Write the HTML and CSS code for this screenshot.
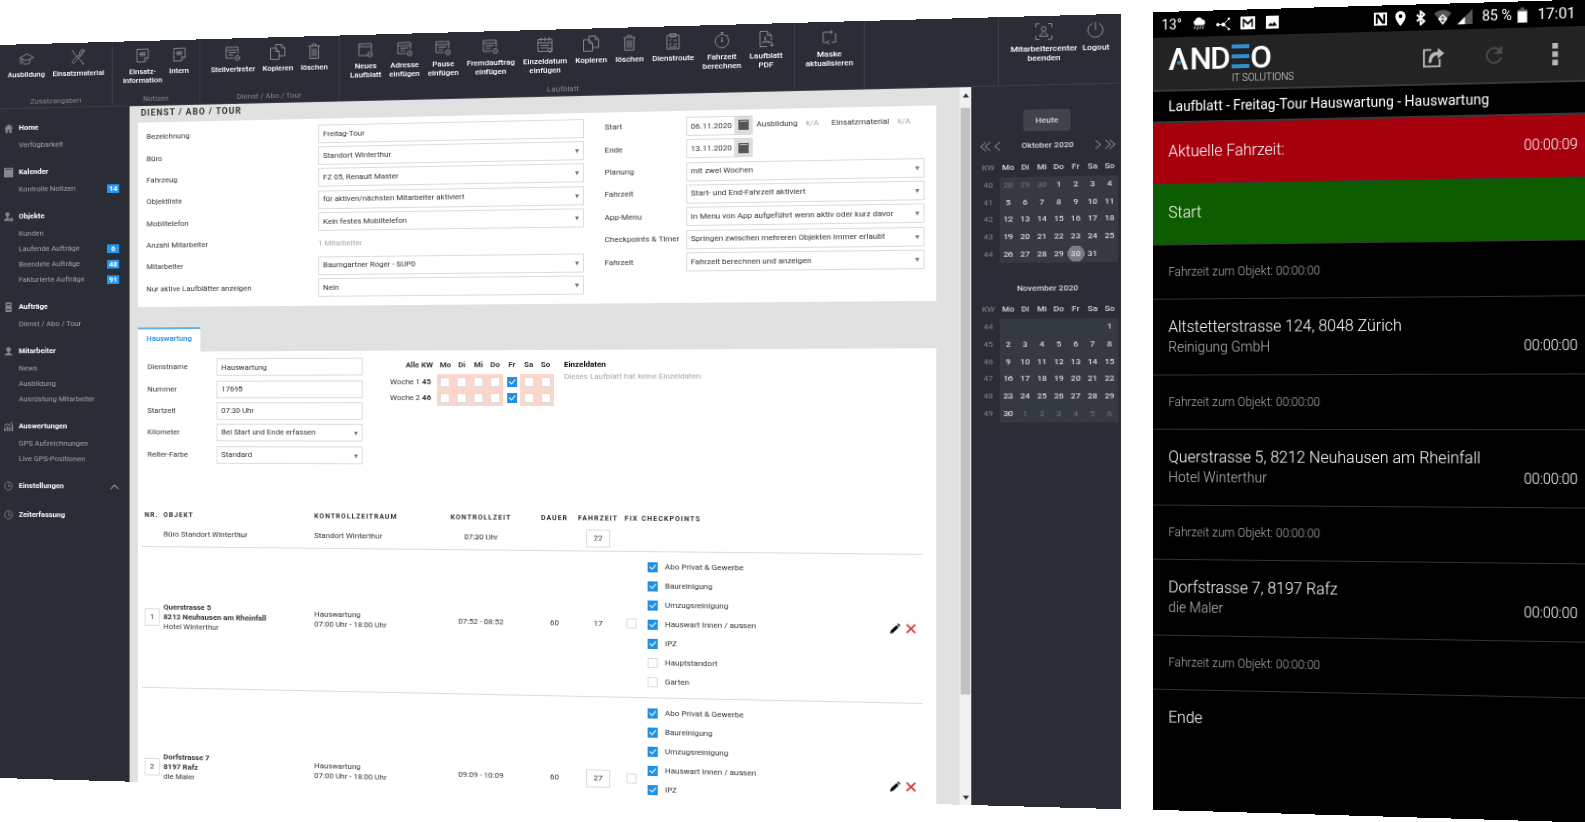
FILE: index.html
```html
<!DOCTYPE html>
<html lang="de">
<head>
<meta charset="utf-8">
<title>ANDEO – Dienst / Abo / Tour</title>
<link rel="stylesheet" href="styles.css">
</head>
<body>
<svg class="sprite" aria-hidden="true">
  <symbol id="cap" viewBox="0 0 18 18"><path d="M2 8l8-4 7 4-8 3zM5 9.500v4c2 1.500 6 1.500 8 0v-4M3 9v6"/></symbol>
  <symbol id="tools" viewBox="0 0 18 18"><path d="M4 4l11 12M2 2l2 .5.5 2M15 16l-2 0M10 8l4-4M16 2.500a3 3 0 0 0-3 4L5.500 14a1.500 1.500 0 1 1-2-2L11 5.500a3 3 0 0 1 4-4l-1.500 2 1 1z"/></symbol>
  <symbol id="note" viewBox="0 0 18 18"><path d="M3 2.500h12v9l-4 4H3zM11 15.500v-4h4M6 6h6M6 9h6M5 7.500h7" /></symbol>
  <symbol id="form" viewBox="0 0 18 18"><path d="M2 3h13v7M2 3v11h8M2 6h13M4.500 8.500h8M4.500 11h5"/><circle cx="14" cy="14" r="2.500"/><path d="M12.800 14h2.400"/></symbol>
  <symbol id="copy" viewBox="0 0 18 18"><path d="M7 5V1.500h6l3.500 3.500v8H11M13 1.500V5h3.500M1.500 5H7l3.500 3.500v8h-9zM7 5v3.500h3.500"/></symbol>
  <symbol id="trash" viewBox="0 0 18 18"><path d="M3 4h12M7 4V2h4v2M4.500 4v12.500h9V4M7 6.500v8M9 6.500v8M11 6.500v8"/></symbol>
  <symbol id="new" viewBox="0 0 18 18"><path d="M2 3h13v8M2 3v12h9M2 6h13M4 4.500h1"/><circle cx="13.500" cy="14" r="2.500"/><path d="M12.300 14h2.400"/></symbol>
  <symbol id="date" viewBox="0 0 18 18"><path d="M2 3.500h14v12H2zM2 7h14M5 1.500v4M9 1.500v4M13 1.500v4M4.500 9.500h9M4.500 12h8"/><circle cx="14" cy="14.500" r="2"/></symbol>
  <symbol id="route" viewBox="0 0 18 18"><path d="M3 3h12v13.500H3zM6 1.500h6v3H6zM5 7.500l1 1 1.500-2M5 11.500l1 1 1.500-2M9.500 8h3.500M9.500 12h3.500M5 14.500h8"/></symbol>
  <symbol id="watch" viewBox="0 0 18 18"><circle cx="9" cy="10" r="6.500"/><path d="M9 6v5M7.500 1.500h3M9 1.500v2M14 4l1 1M8 10h2"/></symbol>
  <symbol id="pdf" viewBox="0 0 18 18"><path d="M10 16.500H3v-15h7l4 4v5M10 1.500v4h4M5 13c3-2 4-5 3-6s-1 4 4 5-6-1-7 1M14.500 12v4M12.500 14.500l2 2 2-2"/></symbol>
  <symbol id="refresh" viewBox="0 0 18 18"><path d="M7 14H3V4h9M11 14h4V5M10 2l2 2-2 2M9 12l-2 2 2 2"/></symbol>
  <symbol id="person" viewBox="0 0 18 18"><path d="M1.500 5V1.500H5M13 1.500h3.500V5M16.500 13v3.500H13M5 16.500H1.500V13M5 13.500c0-2 2-2 3-3v-1M13 13.500c0-2-2-2-3-3v-1M5 13.500h8"/><circle cx="9" cy="6.500" r="2.200"/></symbol>
  <symbol id="power" viewBox="0 0 18 18"><path d="M6 2.500a7 7 0 1 0 6 0M9 1v8"/></symbol>
  <symbol id="home" viewBox="0 0 12 12"><path d="M6 1L0 6.500h2V12h3V8h2v4h3V6.500h2L10 4.500V1.500H9v2z"/></symbol>
  <symbol id="cal" viewBox="0 0 12 12"><path fill-rule="evenodd" d="M0 0h12v12H0zM1.500 1.500v1h9v-1z"/><path class="day" d="M3 5h1.300v4.500H3zM6 5h3v1H7.200v.7H9v2.800H6v-1h1.900V8H6z"/></symbol>
  <symbol id="user" viewBox="0 0 12 12"><circle cx="6" cy="3.500" r="3"/><path d="M5 6h2v2l4 1.500V11H1V9.500L5 8z"/></symbol>
  <symbol id="userhome" viewBox="0 0 12 12"><circle cx="4.500" cy="3" r="2.800"/><path d="M3.500 5h2v2.500L7 8v3H0V9.500l3.500-2zM10 6.500L7.500 9v3h2v-2h1v2H12V9z"/></symbol>
  <symbol id="book" viewBox="0 0 12 12"><path fill-rule="evenodd" d="M2 0h8v12H2zM3.500 2v2h5V2zM3.500 8.500v1h5v-1z"/></symbol>
  <symbol id="chart" viewBox="0 0 12 12"><path d="M0 8h2v4H0zM3.300 6h2v6h-2zM6.600 7h2v5h-2zM10 4h2v8h-2zM0 5l4-3 3 2 4-4 .7.700L7 5.300 4 3.200.600 6z"/></symbol>
  <symbol id="dial" viewBox="0 0 12 12"><circle cx="6" cy="6" r="5" fill="none" stroke="currentColor"/><path d="M6 3h1v3h2v1H5.500z"/></symbol>
  <symbol id="pencil" viewBox="0 0 12 12"><path d="M0 12l1-3.500 6.500-6.500 2.500 2.500L3.500 11zM8.300 1.200L9.500 0 12 2.500l-1.200 1.200z"/></symbol>
</svg>

<main class="stage">
<section class="panel desktop">
  <header class="toolbar">
    <div class="group">
      <div class="tools">
        <button class="tool"><svg><use href="#cap"/></svg>Ausbildung</button>
        <button class="tool"><svg><use href="#tools"/></svg>Einsatzmaterial</button>
      </div>
      <span class="group-title">Zusatzangaben</span>
    </div>
    <div class="group roomy">
      <div class="tools">
        <button class="tool"><svg><use href="#note"/></svg>Einsatz-<br>information</button>
        <button class="tool"><svg><use href="#note"/></svg>Intern</button>
      </div>
      <span class="group-title">Notizen</span>
    </div>
    <div class="group roomy">
      <div class="tools">
        <button class="tool"><svg><use href="#form"/></svg>Stellvertreter</button>
        <button class="tool"><svg><use href="#copy"/></svg>Kopieren</button>
        <button class="tool"><svg><use href="#trash"/></svg>löschen</button>
      </div>
      <span class="group-title">Dienst / Abo / Tour</span>
    </div>
    <div class="group roomy">
      <div class="tools">
        <button class="tool"><svg><use href="#new"/></svg>Neues<br>Laufblatt</button>
        <button class="tool"><svg><use href="#form"/></svg>Adresse<br>einfügen</button>
        <button class="tool"><svg><use href="#form"/></svg>Pause<br>einfügen</button>
        <button class="tool"><svg><use href="#form"/></svg>Fremdauftrag<br>einfügen</button>
        <button class="tool"><svg><use href="#date"/></svg>Einzeldatum<br>einfügen</button>
        <button class="tool"><svg><use href="#copy"/></svg>Kopieren</button>
        <button class="tool"><svg><use href="#trash"/></svg>löschen</button>
        <button class="tool"><svg><use href="#route"/></svg>Dienstroute</button>
        <button class="tool"><svg><use href="#watch"/></svg>Fahrzeit<br>berechnen</button>
        <button class="tool"><svg><use href="#pdf"/></svg>Laufblatt<br>PDF</button>
      </div>
      <span class="group-title">Laufblatt</span>
    </div>
    <div class="group">
      <div class="tools">
        <button class="tool"><svg><use href="#refresh"/></svg>Maske<br>aktualisieren</button>
      </div>
    </div>
    <div class="group"></div>
    <div class="group roomy">
      <div class="tools">
        <button class="tool"><svg><use href="#person"/></svg>Mitarbeitercenter<br>beenden</button>
        <button class="tool"><svg><use href="#power"/></svg>Logout</button>
      </div>
    </div>
  </header>

  <div class="body">
    <nav class="sidebar">
      <section><h2><svg><use href="#home"/></svg>Home</h2>
        <a href="#">Verfügbarkeit</a></section>
      <section><h2><svg><use href="#cal"/></svg>Kalender</h2>
        <a href="#">Kontrolle Notizen<b>14</b></a></section>
      <section><h2><svg><use href="#userhome"/></svg>Objekte</h2>
        <a href="#">Kunden</a>
        <a href="#">Laufende Aufträge<b>6</b></a>
        <a href="#">Beendete Aufträge<b>48</b></a>
        <a href="#">Fakturierte Aufträge<b>91</b></a></section>
      <section><h2><svg><use href="#book"/></svg>Aufträge</h2>
        <a href="#">Dienst / Abo / Tour</a></section>
      <section><h2><svg><use href="#user"/></svg>Mitarbeiter</h2>
        <a href="#">News</a>
        <a href="#">Ausbildung</a>
        <a href="#">Ausrüstung Mitarbeiter</a></section>
      <section><h2><svg><use href="#chart"/></svg>Auswertungen</h2>
        <a href="#">GPS Aufzeichnungen</a>
        <a href="#">Live GPS-Positionen</a></section>
      <section><h2><svg><use href="#dial"/></svg>Einstellungen<svg class="chevron" viewBox="0 0 12 8"><path d="M1 7l5-5 5 5"/></svg></h2></section>
      <section><h2><svg><use href="#dial"/></svg>Zeiterfassung</h2></section>
    </nav>

    <div class="content">
      <h1>DIENST / ABO / TOUR</h1>
      <form class="card tour">
        <div class="rows left">
          <label for="bez">Bezeichnung</label><input id="bez" value="Freitag-Tour">
          <label for="buero">Büro</label><span class="pick"><select id="buero"><option>Standort Winterthur</option></select></span>
          <label for="fzg">Fahrzeug</label><span class="pick"><select id="fzg"><option>FZ 05, Renault Master</option></select></span>
          <label for="obj">Objektliste</label><span class="pick"><select id="obj"><option>für aktiven/nächsten Mitarbeiter aktiviert</option></select></span>
          <label for="mob">Mobiltelefon</label><span class="pick"><select id="mob"><option>Kein festes Mobiltelefon</option></select></span>
          <span>Anzahl Mitarbeiter</span><span class="muted">1 Mitarbeiter</span>
          <label for="mit">Mitarbeiter</label><span class="pick"><select id="mit"><option>Baumgartner Roger - SUP0</option></select></span>
          <label for="akt">Nur aktive Laufblätter anzeigen</label><span class="pick"><select id="akt"><option>Nein</option></select></span>
        </div>
        <div class="rows right">
          <label for="start">Start</label>
          <div class="date"><input id="start" value="06.11.2020"><button type="button" aria-label="Kalender"><svg><use href="#cal"/></svg></button>
            <span>Ausbildung</span><span class="muted">k/A</span><span>Einsatzmaterial</span><span class="muted">k/A</span></div>
          <label for="ende">Ende</label>
          <div class="date"><input id="ende" value="13.11.2020"><button type="button" aria-label="Kalender"><svg><use href="#cal"/></svg></button></div>
          <label for="plan">Planung</label><span class="pick"><select id="plan"><option>mit zwei Wochen</option></select></span>
          <label for="fz1">Fahrzeit</label><span class="pick"><select id="fz1"><option>Start- und End-Fahrzeit aktiviert</option></select></span>
          <label for="app">App-Menu</label><span class="pick"><select id="app"><option>In Menu von App aufgeführt wenn aktiv oder kurz davor</option></select></span>
          <label for="chk">Checkpoints &amp; Timer</label><span class="pick"><select id="chk"><option>Springen zwischen mehreren Objekten immer erlaubt</option></select></span>
          <label for="fz2">Fahrzeit</label><span class="pick"><select id="fz2"><option>Fahrzeit berechnen und anzeigen</option></select></span>
        </div>
      </form>

      <button class="tab">Hauswartung</button>
      <div class="card sheet">
        <div class="service">
          <div class="rows small">
            <label for="dn">Dienstname</label><input id="dn" value="Hauswartung">
            <label for="nr">Nummer</label><input id="nr" value="17695">
            <label for="sz">Startzeit</label><input id="sz" value="07:30 Uhr">
            <label for="km">Kilometer</label><span class="pick"><select id="km"><option>Bei Start und Ende erfassen</option></select></span>
            <label for="rf">Reiter-Farbe</label><span class="pick"><select id="rf"><option>Standard</option></select></span>
          </div>
          <table class="weeks">
            <tr><th>Alle KW</th><th>Mo</th><th>Di</th><th>Mi</th><th>Do</th><th>Fr</th><th>Sa</th><th>So</th></tr>
            <tr><td>Woche 1 <b>45</b></td><td class="off"><input type="checkbox" aria-label="Mo 45"></td><td class="off"><input type="checkbox" aria-label="Di 45"></td><td class="off"><input type="checkbox" aria-label="Mi 45"></td><td class="off"><input type="checkbox" aria-label="Do 45"></td><td><input type="checkbox" checked aria-label="Fr 45"></td><td class="off"><input type="checkbox" aria-label="Sa 45"></td><td class="off"><input type="checkbox" aria-label="So 45"></td></tr>
            <tr><td>Woche 2 <b>46</b></td><td class="off"><input type="checkbox" aria-label="Mo 46"></td><td class="off"><input type="checkbox" aria-label="Di 46"></td><td class="off"><input type="checkbox" aria-label="Mi 46"></td><td class="off"><input type="checkbox" aria-label="Do 46"></td><td><input type="checkbox" checked aria-label="Fr 46"></td><td class="off"><input type="checkbox" aria-label="Sa 46"></td><td class="off"><input type="checkbox" aria-label="So 46"></td></tr>
          </table>
          <div class="single"><h3>Einzeldaten</h3><p>Dieses Laufblatt hat keine Einzeldaten.</p></div>
        </div>

        <table class="stops">
          <colgroup><col class="c-nr"><col class="c-obj"><col class="c-span"><col class="c-time"><col class="c-dur"><col class="c-drive"><col class="c-fix"><col><col class="c-act"></colgroup>
          <thead><tr><th>NR.</th><th>OBJEKT</th><th>KONTROLLZEITRAUM</th><th class="mid">KONTROLLZEIT</th><th class="mid">DAUER</th><th class="mid">FAHRZEIT</th><th class="mid">FIX</th><th class="points-head">CHECKPOINTS</th><th></th></tr></thead>
          <tbody>
            <tr class="base"><td></td><td>Büro Standort Winterthur</td><td>Standort Winterthur</td><td class="mid">07:30 Uhr</td><td></td><td class="mid"><input class="num" value="22" aria-label="Fahrzeit"></td><td></td><td></td><td></td></tr>
            <tr class="stop"><td><input class="pos" value="1" aria-label="Nr."></td><td><b>Querstrasse 5<br>8212 Neuhausen am Rheinfall</b><br>Hotel Winterthur</td><td>Hauswartung<br>07:00 Uhr - 18:00 Uhr</td><td class="mid">07:52 - 08:52</td><td class="mid">60</td><td class="mid">17</td><td class="mid"><input type="checkbox" aria-label="Fix"></td>
              <td class="points"><label><input type="checkbox" checked>Abo Privat &amp; Gewerbe</label><label><input type="checkbox" checked>Baureinigung</label><label><input type="checkbox" checked>Umzugsreinigung</label><label><input type="checkbox" checked>Hauswart Innen / aussen</label><label><input type="checkbox" checked>IPZ</label><label><input type="checkbox">Hauptstandort</label><label><input type="checkbox">Garten</label></td>
              <td><div class="acts"><button aria-label="Bearbeiten"><svg><use href="#pencil"/></svg></button><button class="del" aria-label="Löschen"><svg viewBox="0 0 12 12"><path d="M1 1l10 10M11 1L1 11"/></svg></button></div></td></tr>
            <tr class="stop last"><td><input class="pos" value="2" aria-label="Nr."></td><td><b>Dorfstrasse 7<br>8197 Rafz</b><br>die Maler</td><td>Hauswartung<br>07:00 Uhr - 18:00 Uhr</td><td class="mid">09:09 - 10:09</td><td class="mid">60</td><td class="mid"><input class="num" value="27" aria-label="Fahrzeit"></td><td class="mid"><input type="checkbox" aria-label="Fix"></td>
              <td class="points"><label><input type="checkbox" checked>Abo Privat &amp; Gewerbe</label><label><input type="checkbox" checked>Baureinigung</label><label><input type="checkbox" checked>Umzugsreinigung</label><label><input type="checkbox" checked>Hauswart Innen / aussen</label><label><input type="checkbox" checked>IPZ</label></td>
              <td><div class="acts"><button aria-label="Bearbeiten"><svg><use href="#pencil"/></svg></button><button class="del" aria-label="Löschen"><svg viewBox="0 0 12 12"><path d="M1 1l10 10M11 1L1 11"/></svg></button></div></td></tr>
          </tbody>
        </table>
      </div>
    </div>

    <div class="scroll"><i class="up"></i><i class="thumb"></i><i class="down"></i></div>

    <aside class="calendar">
      <button class="today">Heute</button>
      <div class="month"><svg viewBox="0 0 24 12"><path d="M7 1L1 6l6 5M12 1L6 6l6 5M23 1l-6 5 6 5"/></svg><span>Oktober 2020</span><svg viewBox="0 0 24 12"><path d="M1 1l6 5-6 5M12 1l6 5-6 5M17 1l6 5-6 5"/></svg></div>
      <table class="days five">
        <thead><tr><th>KW</th><th>Mo</th><th>Di</th><th>Mi</th><th>Do</th><th>Fr</th><th>Sa</th><th>So</th></tr></thead>
        <tbody>
        <tr><th>40</th><td class="dim">28</td><td class="dim">29</td><td class="dim">30</td><td>1</td><td>2</td><td>3</td><td>4</td></tr>
        <tr><th>41</th><td>5</td><td>6</td><td>7</td><td>8</td><td>9</td><td>10</td><td>11</td></tr>
        <tr><th>42</th><td>12</td><td>13</td><td>14</td><td>15</td><td>16</td><td>17</td><td>18</td></tr>
        <tr><th>43</th><td>19</td><td>20</td><td>21</td><td>22</td><td>23</td><td>24</td><td>25</td></tr>
        <tr><th>44</th><td>26</td><td>27</td><td>28</td><td>29</td><td class="now">30</td><td>31</td><td></td></tr>
        </tbody>
      </table>
      <div class="month plain"><span>November 2020</span></div>
      <table class="days six">
        <thead><tr><th>KW</th><th>Mo</th><th>Di</th><th>Mi</th><th>Do</th><th>Fr</th><th>Sa</th><th>So</th></tr></thead>
        <tbody>
        <tr><th>44</th><td></td><td></td><td></td><td></td><td></td><td></td><td>1</td></tr>
        <tr><th>45</th><td>2</td><td>3</td><td>4</td><td>5</td><td>6</td><td>7</td><td>8</td></tr>
        <tr><th>46</th><td>9</td><td>10</td><td>11</td><td>12</td><td>13</td><td>14</td><td>15</td></tr>
        <tr><th>47</th><td>16</td><td>17</td><td>18</td><td>19</td><td>20</td><td>21</td><td>22</td></tr>
        <tr><th>48</th><td>23</td><td>24</td><td>25</td><td>26</td><td>27</td><td>28</td><td>29</td></tr>
        <tr><th>49</th><td>30</td><td class="dim">1</td><td class="dim">2</td><td class="dim">3</td><td class="dim">4</td><td class="dim">5</td><td class="dim">6</td></tr>
        </tbody>
      </table>
    </aside>
  </div>
</section>

<section class="panel phone">
  <div class="status">
    <div class="notices">
      <span>13°</span>
      <svg viewBox="0 0 16 16"><path d="M4 9a3 3 0 0 1 0-5.500A4 4 0 0 1 11.500 3 3 3 0 0 1 12 9z"/><path class="line" d="M4 10l-1 3M7 10l-1 4M10 10l-1 3M13 10l-1 3"/></svg>
      <svg viewBox="0 0 16 16"><circle cx="2" cy="9" r="1.800"/><circle cx="8" cy="9" r="2.200"/><path class="line" d="M1 9h7l6-6M8 9l6 5"/><circle cx="14" cy="3" r="1.300"/><circle cx="14" cy="14" r="1.300"/></svg>
      <svg viewBox="0 0 16 16"><path fill-rule="evenodd" d="M0 1h16v14H0zM2.500 3.500v9H4V6.500L8 10l4-3.500v6h1.500v-9h-1L8 7.500 3.500 3.500z"/></svg>
      <svg viewBox="0 0 16 16"><path fill-rule="evenodd" d="M1 1h14v14H1zM3 12h10L10 7.500 8 10.500 6 8.500z"/></svg>
    </div>
    <div class="signals">
      <svg viewBox="0 0 16 16"><path fill-rule="evenodd" d="M1 1h14v14H1zM3 3v10h2V6l5 7h3V3h-2v7L6 3z"/></svg>
      <svg viewBox="0 0 16 16"><path fill-rule="evenodd" d="M8 0a5.500 5.500 0 0 1 5.500 5.500C13.500 10 8 16 8 16S2.500 10 2.500 5.500A5.500 5.500 0 0 1 8 0zm0 3.500a2 2 0 1 0 0 4 2 2 0 0 0 0-4z"/></svg>
      <svg viewBox="0 0 16 16"><path class="line thick" d="M4 4.500l8 7L8 15V1l4 3.500-8 7"/></svg>
      <svg class="wifi" viewBox="0 0 18 16"><path class="faint" d="M0 4a13 13 0 0 1 18 0L9 15z"/><path fill-rule="evenodd" d="M9 4.500l5 5L9 16 4 9.500zM9 6.500l-2.500 2.500h5zM6.500 10.500L9 13.500l2.500-3z"/></svg>
      <svg viewBox="0 0 16 16"><path class="faint" d="M16 0v16H0z"/><path d="M8 8v8H0z"/></svg>
      <span class="charge">85 %</span>
      <svg class="battery" viewBox="0 0 10 16"><path class="faint" d="M3 0h4v2h3v3H0V2h3z"/><path d="M0 4h10v12H0z"/></svg>
      <span class="clock">17:01</span>
    </div>
  </div>
  <div class="appbar">
    <svg class="logo" viewBox="0 -6 130 54" role="img" aria-label="ANDEO IT SOLUTIONS">
      <text class="mark" x="0" y="27">Λ</text><text class="mark" x="22" y="27">N</text><text class="mark" x="43" y="27">D</text>
      <circle cx="11" cy="20" r="2"/>
      <path d="M65 3h18v4H65zM65 13h18v4H65zM65 23h18v4H65z"/>
      <text class="mark" x="84" y="27">O</text>
      <text class="sub" x="65" y="40">IT SOLUTIONS</text>
    </svg>
    <i></i>
    <button aria-label="Teilen"><svg viewBox="0 0 24 24"><path class="box" d="M10 4H2v18h17v-8"/><path d="M7 18c0-8 3-12 10-12V2l7 6-7 6v-4c-4 0-6 2-7 8z"/></svg></button>
    <button class="reload" aria-label="Aktualisieren"><svg viewBox="0 0 24 24"><path class="box" d="M18 6a8 8 0 1 0 2 8"/><path d="M21 1v9h-9z"/></svg></button>
    <button aria-label="Menü"><svg viewBox="0 0 24 24"><path d="M9 0h6v6H9zM9 9h6v6H9zM9 18h6v6H9z"/></svg></button>
  </div>
  <h2 class="route-title">Laufblatt - Freitag-Tour Hauswartung - Hauswartung</h2>
  <div class="action red"><span>Aktuelle Fahrzeit:</span><time>00:00:09</time></div>
  <div class="action green"><span>Start</span></div>
  <div class="travel">Fahrzeit zum Objekt: 00:00:00</div>
  <div class="visit"><span>Altstetterstrasse 124, 8048 Zürich</span><div><small>Reinigung GmbH</small><time>00:00:00</time></div></div>
  <div class="travel">Fahrzeit zum Objekt: 00:00:00</div>
  <div class="visit"><span>Querstrasse 5, 8212 Neuhausen am Rheinfall</span><div><small>Hotel Winterthur</small><time>00:00:00</time></div></div>
  <div class="travel">Fahrzeit zum Objekt: 00:00:00</div>
  <div class="visit"><span>Dorfstrasse 7, 8197 Rafz</span><div><small>die Maler</small><time>00:00:00</time></div></div>
  <div class="travel">Fahrzeit zum Objekt: 00:00:00</div>
  <div class="finish">Ende</div>
</section>
</main>
</body>
</html>
```
FILE: styles.css
```css
* { box-sizing: border-box; }
body { margin: 0; background: #fff; font: 8px/10px Roboto, "Liberation Sans", sans-serif; color: #333; overflow: hidden; }
button, input, select { font: inherit; color: inherit; margin: 0; padding: 0; border: 0; background: none; border-radius: 0; }
a { color: inherit; text-decoration: none; }
h1, h2, h3, p { margin: 0; font-size: inherit; }
b, th { font-weight: 700; }
.sprite { display: none; }

/* Two tilted screens side by side */
.stage { display: grid; grid-template-columns: minmax(0, 1122fr) minmax(0, 433fr); column-gap: 30px; align-items: center; height: 100vh; }
.panel { overflow: hidden; display: flex; flex-direction: column; }
.desktop { height: calc(100vh - 59px); background: #2a2d35; transform: translateX(-23px) perspective(960px) rotateY(-4deg); }
.phone { height: calc(100vh - 12px); background: #000; color: #fff; transform: translateX(-3px) perspective(960px) rotateY(-4deg); }

/* Toolbar */
.toolbar { display: grid; grid-template-columns: 121fr 93fr 145fr 455fr 67fr 127fr 114fr; height: 67px; flex: none; border-bottom: 1px solid #3b3e46; }
.group { display: flex; flex-direction: column; justify-content: space-between; border-right: 1px solid #3b3e46; padding: 6px 8px 1px; min-width: 0; }
.group:last-child { border: 0; }
.roomy { padding: 6px 11px 1px; }
.tools { display: flex; justify-content: space-between; }
.group:nth-child(5) .tools { justify-content: center; }
.tool { display: flex; flex-direction: column; align-items: center; color: #fff; font-weight: 500; line-height: 9px; text-align: center; white-space: nowrap; }
.tool svg { width: 18px; height: 18px; margin-bottom: 3px; fill: none; stroke: #85878c; stroke-width: 1; }
.group-title { text-align: center; color: #85878c; }

.body { display: flex; flex: 1; min-height: 0; }

/* Sidebar */
.sidebar { flex: 0 0 139px; padding: 10px 11px 0 4px; display: flex; flex-direction: column; gap: 10px; color: #a3a5a9; }
.sidebar h2 { display: flex; align-items: center; gap: 6px; line-height: 20px; color: #fff; font-weight: 700; }
.sidebar h2 svg { width: 10px; height: 10px; fill: #85878c; color: #85878c; }
.sidebar .day { fill: #2a2d35; }
.sidebar .chevron { margin-left: auto; fill: none; stroke: #fff; }
.sidebar a { display: flex; justify-content: space-between; align-items: center; line-height: 16px; padding-left: 16px; }
.sidebar b { background: #2196f3; color: #fff; line-height: 9px; width: 13px; text-align: center; }

/* Content */
.content { flex: 1; min-width: 0; background: #e1e1e1; padding: 1px 22px 0 9px; overflow: hidden; }
.content h1 { padding-left: 3px; font-size: 9px; line-height: 12px; padding-bottom: 4px; letter-spacing: 1px; }
.card { background: #fff; }
.tour { display: grid; grid-template-columns: 449fr 310fr; column-gap: 21px; padding: 4px 11px 7px 9px; height: 190px; }
.rows { display: grid; grid-auto-rows: 1fr; align-items: center; white-space: nowrap; }
.left { grid-template-columns: 180px 1fr; }
.right { grid-template-columns: 80px 1fr; height: 157px; }
.rows input, .pick { border: 1px solid #dcdcdc; height: 19px; padding: 0 4px; width: 100%; min-width: 0; background: #fff; }
.pick { display: block; position: relative; }
.pick::after { content: ""; position: absolute; right: 4px; top: 7px; border: 2px solid transparent; border-top: 4px solid #777; border-bottom: 0; pointer-events: none; }
.pick select { appearance: none; width: 100%; height: 100%; display: block; outline: 0; }
.muted { color: #a5a5a5; }
.date { display: flex; align-items: center; }
.rows .date input { width: 48px; flex: none; padding-right: 0; }
.date button { background: #dcdcdc; width: 17px; height: 19px; display: grid; place-items: center; margin-right: 4px; flex: none; }
.date svg { width: 10px; height: 10px; fill: #555; }
.date .day { fill: #fff; }
.date .muted { margin: 0 12px 0 8px; }
.tab { display: block; margin-top: 21px; height: 25px; width: 66px; background: #fff; border-top: 2px solid #5fb0e8; color: #1787d8; font-weight: 500; text-align: center; padding-bottom: 3px; }
.sheet { padding: 5px 13px 0 4px; height: 600px; }
.service { display: flex; height: 154px; align-items: flex-start; }
.small { grid-template-columns: 73px 152px; height: 112px; margin-left: 6px; flex: none; }
.small input, .small .pick { height: 18px; }

input[type="checkbox"] { appearance: none; width: 10px; height: 10px; border: 1px solid #dcdcdc; background: #fff; display: inline-block; vertical-align: middle; position: relative; flex: none; }
input[type="checkbox"]:checked { background: #1f8fe5; border-color: #1f8fe5; }
input[type="checkbox"]:checked::after { content: ""; position: absolute; left: 2px; top: 0; width: 3px; height: 5px; border: solid #fff; border-width: 0 1px 1px 0; transform: rotate(40deg); }

.weeks { border-collapse: collapse; margin-left: 26px; flex: none; width: 168px; table-layout: fixed; text-align: center; }
.weeks th, .weeks td { padding: 0; height: 16px; }
.weeks tr:first-child th { height: 19px; }
.weeks th:first-child, .weeks td:first-child { width: 50px; text-align: right; padding-right: 4px; white-space: nowrap; }
.weeks td:first-child { padding-right: 6px; }
.off { background: #fcd5cb; }
.single { margin-left: 10px; padding-top: 5px; white-space: nowrap; color: #000; }
.single p { color: #a5a5a5; line-height: 13px; }

.stops { width: 100%; table-layout: fixed; border-collapse: collapse; }
.stops td, .stops th { padding: 0; text-align: left; white-space: nowrap; vertical-align: middle; }
.stops thead th { height: 17px; letter-spacing: 1px; font-size: 7px; }
.stops thead th:first-child, .stops td:first-child { padding-left: 3px; }
.stops tr > .mid { text-align: center; }
.stops .points-head { padding-left: 3px; }
.c-nr { width: 23px; } .c-obj { width: 158px; } .c-span { width: 114px; } .c-time { width: 113px; }
.c-dur { width: 35px; } .c-drive { width: 52px; } .c-fix { width: 14px; } .c-act { width: 40px; }
.base { height: 24px; border-bottom: 1px solid #dcdcdc; }
.stop { height: 145px; border-bottom: 1px solid #dcdcdc; }
.last { height: 163px; }
.pos, .num { border: 1px solid #dcdcdc; text-align: center; width: 16px; height: 18px; }
.num { width: 24px; }
.stops .points { vertical-align: top; padding: 6px 0 0 9px; }
.points label { display: flex; align-items: center; gap: 7px; height: 19px; }
.acts { display: flex; gap: 5px; padding-left: 9px; }
.acts svg { width: 10px; height: 10px; display: block; }
.del svg { stroke: #e0393e; stroke-width: 2; }

.scroll { flex: 0 0 11px; background: #f1f1f1; display: flex; flex-direction: column; align-items: center; padding: 6px 0 5px; }
.up, .down { border: 3px solid transparent; }
.up { border-bottom: 4px solid #333; border-top: 0; }
.down { border-top: 4px solid #333; border-bottom: 0; margin-top: auto; }
.thumb { width: 9px; height: 83%; background: #c1c1c1; margin-top: 10px; }

/* Calendar */
.calendar { flex: 0 0 140px; padding: 23px 3px 0 5px; color: #d8d9db; font-weight: 500; display: flex; flex-direction: column; }
.today { width: 44px; height: 21px; background: #40434c; border-radius: 2px; margin-left: 44px; flex: none; }
.month { display: flex; justify-content: space-between; align-items: center; height: 27px; flex: none; padding: 0 2px; margin-left: 1px; }
.month svg { width: 20px; height: 10px; fill: none; stroke: #a5a7ab; }
.plain { justify-content: center; height: 37px; padding-top: 12px; }
.days { border-collapse: collapse; table-layout: fixed; width: 100%; text-align: center; }
.days th, .days td { padding: 0; font-weight: 500; }
.days th:first-child { width: 22px; color: #73767c; }
.days thead th { height: 17px; padding-bottom: 1px; }
.days td { background: #343a3f; }
.five { height: 100px; }
.six { height: 117px; }
.days .dim { color: #666a70; }
.days .now { background: radial-gradient(circle, #7b7d82 0 8px, #343a3f 8px); }

/* Phone */
.phone i { flex: 1; }
.status { height: 26px; flex: none; display: flex; align-items: center; justify-content: space-between; padding: 0 9px; font-size: 14px; }
.notices, .signals { display: flex; align-items: center; gap: 10px; }
.signals { gap: 5px; }
.status svg { width: 15px; height: 15px; fill: #fff; flex: none; }
.status .line { fill: none; stroke: #fff; stroke-width: 1; }
.status .thick { stroke-width: 2; }
.status .faint { fill: #555; }
.status .wifi { width: 19px; }
.status .battery { width: 10px; margin-right: 5px; }
.charge { margin-left: 4px; }
.clock { font-size: 15px; }
.appbar { height: 55px; flex: none; background: #232323; border-bottom: 2px solid #383838; display: flex; align-items: center; padding: 0 18px 0 16px; }
.logo { width: 130px; height: 54px; overflow: visible; }
.logo .mark { font: 500 32px Roboto, sans-serif; fill: #fff; }
.logo .sub { font: 300 10px Roboto, sans-serif; fill: #ddd; }
.logo path, .logo circle { fill: #2f8fd6; }
.appbar button { width: 22px; height: 22px; margin-left: 38px; fill: #b8b8b8; }
.appbar button svg { display: block; width: 22px; height: 22px; }
.appbar .box { fill: none; stroke: #b8b8b8; stroke-width: 2; }
.appbar .reload { fill: #4c4c4c; }
.reload .box { stroke: #4c4c4c; }
.route-title { flex: none; height: 32px; font-size: 14px; font-weight: 400; line-height: 30px; padding-left: 16px; border-bottom: 2px solid #383838; white-space: nowrap; }
.action { flex: none; height: 62px; display: flex; justify-content: space-between; align-items: center; padding: 0 7px 4px 16px; border-bottom: 1px solid #383838; font-size: 16px; font-weight: 300; }
.red { background: #a6000c; }
.green { background: #0d5c00; }
.phone time { font-size: 14px; font-weight: 300; }
.travel { flex: none; height: 55px; line-height: 54px; padding-left: 16px; border-bottom: 1px solid #333; font-size: 12px; font-weight: 300; color: #aaa; }
.visit { flex: none; height: 77px; padding: 18px 7px 0 16px; border-bottom: 1px solid #333; font-size: 16px; font-weight: 300; line-height: 20px; }
.visit div { display: flex; justify-content: space-between; }
.visit small { font-size: 14px; color: #bbb; }
.finish { padding: 18px 16px; font-size: 16px; font-weight: 300; line-height: 20px; }
```
